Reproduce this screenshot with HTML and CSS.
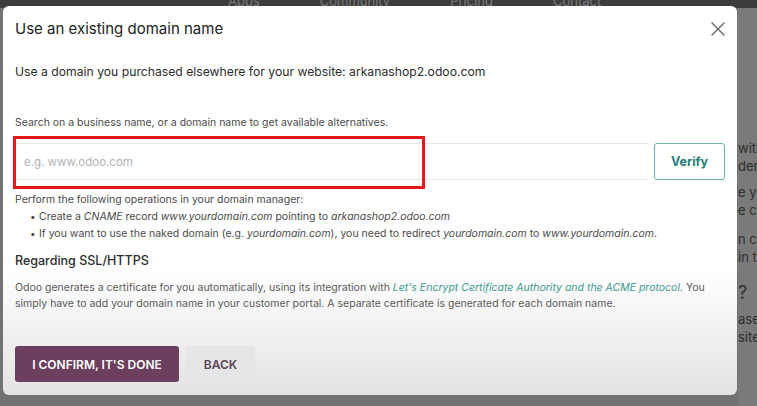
FILE: index.html
```html
<!DOCTYPE html>
<html>
<head>
<meta charset="utf-8">
<link rel="stylesheet" href="styles.css">
</head>
<body>
<div class="page">
  <div class="topbar">
    <span>Apps</span><span>Community</span><span>Pricing</span><span>Contact</span>
  </div>
  <div class="behind">
    <div class="behind-main"></div>
    <div class="behind-side">
      <p class="l1">with</p>
      <p>der</p>
      <p class="l3">e yo</p>
      <p>e ch</p>
      <p class="l5">n ca</p>
      <p>in th</p>
      <p class="q">?</p>
      <p class="l8">ase</p>
      <p>site</p>
    </div>
  </div>
</div>

<div class="modal">
  <header class="modal-header">
    <h1 class="modal-title">Use an existing domain name</h1>
    <button class="close" aria-label="Close">
      <svg width="14" height="14" viewBox="0 0 14 14"><path d="M1 1 L13 13 M13 1 L1 13" stroke="#666" stroke-width="1.4" fill="none" stroke-linecap="round"/></svg>
    </button>
  </header>
  <div class="modal-body">
    <p class="lead">Use a domain you purchased elsewhere for your website: arkanashop2.odoo.com</p>
    <p class="hint">Search on a business name, or a domain name to get available alternatives.</p>
    <div class="search-row">
      <input class="domain-input" type="text" placeholder="e.g. www.odoo.com">
      <button class="verify">Verify</button>
      <div class="highlight"></div>
    </div>
    <p class="small ops-intro">Perform the following operations in your domain manager:</p>
    <ul class="ops">
      <li>Create a <em>CNAME</em> record <em>www.yourdomain.com</em> pointing to <em>arkanashop2.odoo.com</em></li>
      <li>If you want to use the naked domain (e.g. <em>yourdomain.com</em>), you need to redirect <em>yourdomain.com</em> to <em>www.yourdomain.com</em>.</li>
    </ul>
    <h2 class="section">Regarding SSL/HTTPS</h2>
    <p class="small para">Odoo generates a certificate for you automatically, using its integration with <a class="link">Let's Encrypt Certificate Authority and the ACME protocol</a>. You simply have to add your domain name in your customer portal. A separate certificate is generated for each domain name.</p>
  </div>
  <footer class="modal-footer">
    <button class="btn primary">I CONFIRM, IT'S DONE</button>
    <button class="btn secondary">BACK</button>
  </footer>
</div>
</body>
</html>
```
FILE: styles.css
```css
* { box-sizing: border-box; }
html, body { margin: 0; padding: 0; }
body {
  width: 757px;
  height: 406px;
  overflow: hidden;
  background: #6f6f6f;
  font-family: Inter, "Noto Sans", "Liberation Sans", sans-serif;
  position: relative;
}
.page { width: 757px; height: 406px; display: flex; flex-direction: column; }
.topbar {
  height: 8px;
  background: #3d3d3d;
  display: flex;
  gap: 60px;
  padding-left: 228px;
  font-size: 13px;
  line-height: 2px;
  color: #7a7a7a;
  overflow: hidden;
}
.behind { flex: 1; display: flex; background: #727272; }
.behind-main { flex: 1; }
.behind-side {
  width: 19px;
  padding-top: 131px;
  overflow: hidden;
  background: #7a7a7a;
  color: #2e2e2e;
  font-size: 13px;
  white-space: nowrap;
}
.behind-side p { margin: 0; line-height: 18px; height: 18px; }
.behind-side .l3 { margin-top: 8px; }
.behind-side .l5 { margin-top: 11px; }
.behind-side .q { margin-top: 18px; font-size: 18px; }
.behind-side .l8 { margin-top: 8px; }

.modal {
  position: absolute;
  left: 3px;
  top: 6px;
  width: 734px;
  height: 389px;
  border-radius: 6px;
  background: linear-gradient(#ffffff 0%, #ffffff 68%, #e3e3e3 100%);
  display: flex;
  flex-direction: column;
  color: #333;
}
.modal-header {
  display: flex;
  align-items: flex-start;
  justify-content: space-between;
  padding: 13px 12px 0 12px;
}
.modal-title {
  margin: 0;
  font-size: 15px;
  font-weight: 400;
  color: #222;
  line-height: 20px;
}
.close {
  border: 0;
  background: none;
  padding: 0;
  margin-top: 3px;
  margin-right: 0;
  width: 14px;
  height: 14px;
  display: flex;
}
.modal-body { padding: 24px 12px 0 12px; flex: 1; }
.lead { margin: 0; font-size: 12.2px; line-height: 18px; color: #2c2c2c; }
.hint { margin: 34px 0 0 0; font-size: 10.5px; line-height: 16px; color: #4a4a4a; }
.search-row {
  position: relative;
  display: flex;
  gap: 6px;
  margin-top: 12px;
}
.domain-input {
  flex: 1;
  height: 37px;
  border: 0;
  border-top: 1px solid #e6e6e6;
  border-bottom: 1px solid #e6e6e6;
  padding: 0 9px;
  font-family: inherit;
  font-size: 11.5px;
  outline: none;
  background: #fff;
}
.domain-input::placeholder { color: #b3b3b3; }
.verify {
  width: 71px;
  height: 37px;
  border: 1px solid #6fb3ad;
  border-radius: 3px;
  background: #fff;
  color: #24807a;
  font-family: inherit;
  font-weight: 700;
  font-size: 12.5px;
  padding: 0;
}
.highlight {
  position: absolute;
  left: -2px;
  top: -7px;
  width: 412px;
  height: 53px;
  border: 3px solid #e3191b;
}
.small { margin: 0; font-size: 10.5px; line-height: 16px; color: #4a4a4a; }
.ops-intro { margin-top: 12px; }
.ops { margin: 0; padding-left: 15px; list-style: none; font-size: 10.5px; line-height: 16px; color: #4a4a4a; }
.ops li::before { content: "\2022"; display: inline-block; width: 9px; font-size: 10px; }
.section { margin: 10px 0 0 0; font-size: 12.5px; font-weight: 500; line-height: 18px; color: #2c2c2c; }
.para { margin-top: 10px; color: #5a5a5a; }
.link { color: #3d9a92; font-style: italic; }
.modal-footer {
  display: flex;
  gap: 7px;
  padding: 0 12px 13px 12px;
}
.btn {
  height: 36px;
  border: 0;
  border-radius: 3px;
  font-family: inherit;
  font-weight: 600;
  font-size: 12px;
}
.primary { width: 164px; background: #6b3f5d; color: #fff; }
.secondary { width: 69px; background: #e6e6e9; color: #5a4555; }
```
